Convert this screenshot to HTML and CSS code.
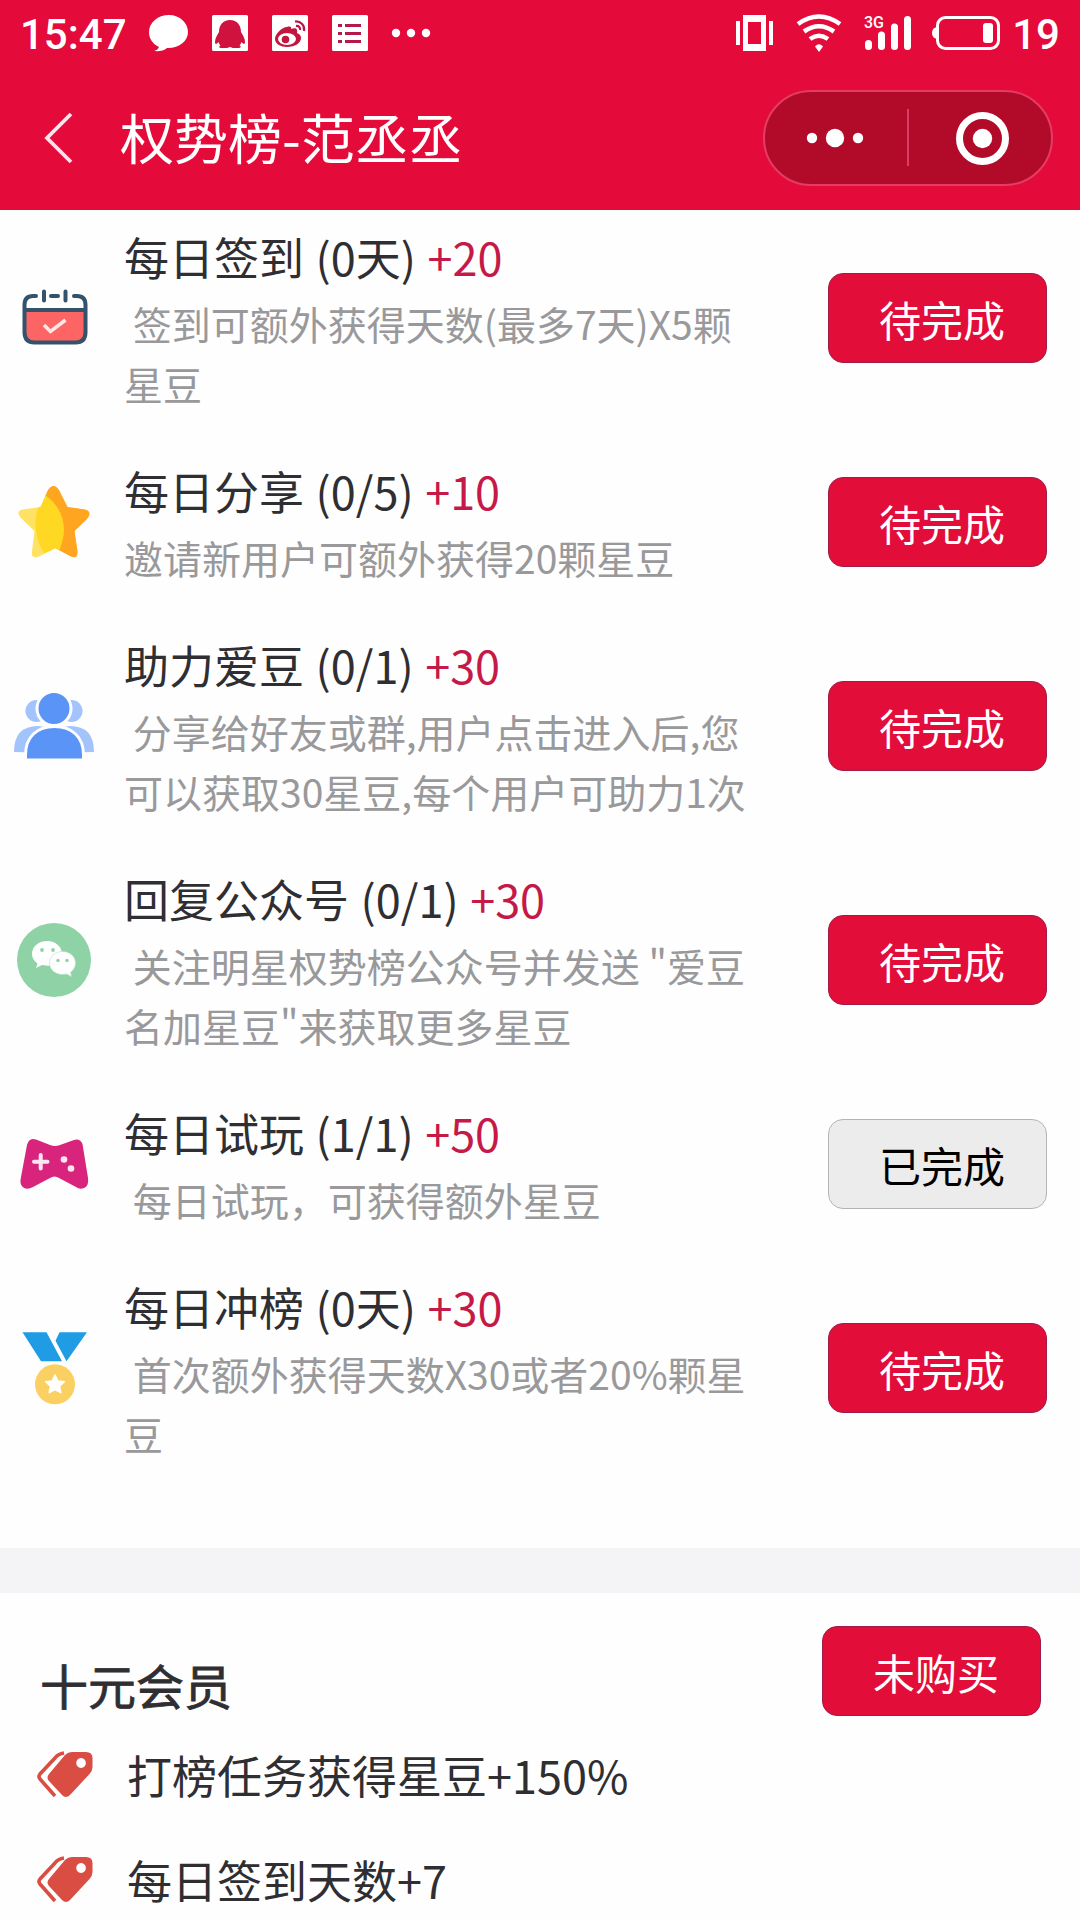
FILE: index.html
```html
<!DOCTYPE html>
<html lang="zh-CN">
<head>
  <meta charset="UTF-8" />
  <meta name="viewport" content="width=device-width, initial-scale=1.0" />
  <title>权势榜-范丞丞</title>
  <link rel="stylesheet" href="styles.css">
</head>
<body>
  <header class="header">
    <div class="status-bar">
      <span class="time">15:47</span>
      <svg class="status-left" width="290" height="40" viewBox="0 0 290 40">
        <path fill="#fff" d="M20 2C9 2 0 9.500 0 19c0 7 4 12 10 15-1 2-2 3-5 4 5 .5 10-.3 13-3 12 .5 21-7 21-16S31 2 20 2z"/>
        <rect x="63" y="2" width="36" height="36" rx="1.500" fill="#fff"/>
        <path fill="#d0123e" d="M81 7c-7 0-11 5-11 12-2 3-4 7-4 10 0 3 2 2 3.500 0 .5 1.500 1 2.500 2 3.300-2 1.500-1.500 2.700 1 2.700h5.500c1.500 0 1.500-1 3-1s1.500 1 3 1H89c3 0 3.500-1.200 1.500-2.700 1-.8 1.500-1.800 2-3.300 1.500 2 3.500 3 3.500 0 0-3-2-7-4-10 0-7-4-12-11-12z"/>
        <rect x="123" y="2" width="36" height="36" rx="1.500" fill="#fff"/>
        <path fill="#c2163f" d="M138 14c-5 0-12 7-12 12 0 5 6 8 12 8 8 0 14-4 14-9 0-3-2-4-4-5 1-4-1-6-6-4 1-2-1-3-4-2z"/>
        <ellipse cx="138" cy="26" rx="9" ry="6" fill="#fff"/>
        <circle cx="136.500" cy="26.500" r="3.800" fill="#c2163f"/>
        <path fill="none" stroke="#b5194a" stroke-width="2.200" d="M146 8.500c6-.5 10 4 9 9.500M147 13c3-.3 4.500 1.500 4 4"/>
        <rect x="183" y="2" width="36" height="36" rx="1.500" fill="#fff"/>
        <path stroke="#b5194a" stroke-width="3" d="M189 12.500h4M196 12.500h16M189 20.500h4M196 20.500h16M189 28.500h4M196 28.500h16"/>
        <g fill="#fff"><circle cx="247" cy="20" r="4.200"/><circle cx="262" cy="20" r="4.200"/><circle cx="277" cy="20" r="4.200"/></g>
      </svg>
      <svg class="status-right" width="270" height="40" viewBox="0 0 270 40">
        <path fill="#fff" fill-rule="evenodd" d="M7 2h23v36H7zM12 9v22h13V9z"/>
        <path stroke="#fff" stroke-width="4" d="M2 8v24M35 8v24"/>
        <g fill="none" stroke="#fff" stroke-width="4.600">
          <path d="M62 11Q83 -4 104 11M68 18.500Q83 8 98 18.500M74 26Q83 19.500 92 26"/>
        </g>
        <path fill="#fff" d="M83 39l-4-5.500q4-4.500 8 0z"/>
        <text class="network" x="128" y="15">3G</text>
        <path stroke="#fff" stroke-width="7" stroke-linecap="round" d="M132.500 30.500v3M145.500 22v11.500M158.500 14v19.500M171.500 6.500v27"/>
        <rect x="201.500" y="4.500" width="61" height="31" rx="8" fill="none" stroke="#fff" stroke-width="3"/>
        <path fill="#fff" d="M201 14q-5 1-5 6t5 6z"/>
        <rect x="247" y="10" width="10" height="20" rx="3" fill="#fff"/>
      </svg>
      <span class="battery">19</span>
    </div>
    <div class="nav">
      <svg class="back" width="30" height="54" viewBox="0 0 30 54">
        <path fill="none" stroke="#ffe3ec" stroke-width="3.800" d="M27 3L3 27l24 24"/>
      </svg>
      <h1>权势榜-范丞丞</h1>
      <div class="capsule">
        <svg width="286" height="92" viewBox="0 0 286 92">
          <g fill="#fff">
            <circle cx="47" cy="46" r="5.200"/>
            <circle cx="70" cy="46" r="9.200"/>
            <circle cx="93" cy="46" r="5.200"/>
            <circle cx="217.500" cy="46.500" r="9.700"/>
          </g>
          <path stroke="#dc3d5f" stroke-width="2" d="M143 17v57"/>
          <circle cx="217.500" cy="46.500" r="23" fill="none" stroke="#fff" stroke-width="7"/>
        </svg>
      </div>
    </div>
  </header>

  <main class="tasks">
    <section class="task">
      <svg class="icon" viewBox="0 0 80 80">
        <path fill="#fd6564" d="M11 32h60v25q0 7-7 7H18q-7 0-7-7z"/>
        <path fill="none" stroke="#34526b" stroke-width="4" stroke-linecap="round" d="M22 18h-3q-8.500 0-8.500 9v27q0 10.500 10 10.500h41q10 0 10-10.500V27q0-9-8.500-9h-3M37 18h7M11 32h60M30 13.500v9M51.500 13.500v9"/>
        <path fill="none" stroke="#ffe9e8" stroke-width="3.500" d="M30 47l6.500 6.500L51.500 42"/>
      </svg>
      <div class="info">
        <h2>每日签到 (0天) <span class="point">+20</span></h2>
        <p>&nbsp;签到可额外获得天数(最多7天)X5颗星豆</p>
      </div>
      <button class="btn">待完成</button>
    </section>

    <section class="task">
      <svg class="icon" viewBox="0 0 80 80">
        <defs>
          <clipPath id="starShape">
            <path d="M34 8Q39.500 0 45 8L53.500 25 71 27.500Q79 30 73 37L60.500 49 63.500 69Q64 78 56 74L41 66 25 74.500Q17 78 18 69L20.500 49 7 36Q1 29 9 27.500L26.500 25z"/>
          </clipPath>
        </defs>
        <g clip-path="url(#starShape)">
          <path fill="#ffe164" d="M0 0h80v80H0z"/>
          <path fill="#ffa51f" d="M30 0h50v80H36z"/>
          <path fill="#ffd823" d="M31 13C25 21 21.500 30 21.500 42q0 17 10 31l13-3C54 50 52 28 31 13z"/>
        </g>
      </svg>
      <div class="info">
        <h2>每日分享 (0/5) <span class="point">+10</span></h2>
        <p>邀请新用户可额外获得20颗星豆</p>
      </div>
      <button class="btn">待完成</button>
    </section>

    <section class="task">
      <svg class="icon" viewBox="0 0 80 80">
        <g fill="#a3c3fd">
          <circle cx="22.500" cy="25" r="11"/>
          <circle cx="57.500" cy="25" r="11"/>
          <path d="M0 66q0-26 24-26 24 1 24 27zM80 66q0-26-24-26-24 1-24 27z"/>
        </g>
        <g fill="#5a94f6" stroke="#fefefe" stroke-width="3">
          <path d="M11.500 76V69C11.500 51 23 40.500 40.500 40.500S69.500 51 69.500 69v7z"/>
          <circle cx="40" cy="22.500" r="17"/>
        </g>
        <path fill="#fefefe" d="M0 72.500h80V80H0zM0 67h12v6H0zM69 67h11v6H69z"/>
      </svg>
      <div class="info">
        <h2>助力爱豆 (0/1) <span class="point">+30</span></h2>
        <p>&nbsp;分享给好友或群,用户点击进入后,您可以获取30星豆,每个用户可助力1次</p>
      </div>
      <button class="btn">待完成</button>
    </section>

    <section class="task">
      <svg class="icon" viewBox="0 0 80 80">
        <circle cx="40" cy="40" r="37" fill="#8ed2a5"/>
        <path fill="#fff" d="M33 21c-9 0-15 6-15 13 0 4 2 7 5.500 9.500L22 48l6-3c13 3 20-3 20-11 0-7-6-13-15-13z"/>
        <path fill="#fff" stroke="#b5e2c4" stroke-width=".6" d="M48.500 31.500c-7.500 0-13 5-13 11.500 0 8 8 13 17 11l5 2.500-1-4c3-2.500 5-5.500 5-9.500 0-6.500-5.500-11.500-13-11.500z"/>
        <g fill="#8ed2a5"><circle cx="28" cy="30" r="1.900"/><circle cx="39" cy="30" r="1.900"/><circle cx="44" cy="40.500" r="1.700"/><circle cx="53" cy="40.500" r="1.700"/></g>
      </svg>
      <div class="info">
        <h2>回复公众号 (0/1) <span class="point">+30</span></h2>
        <p>&nbsp;关注明星权势榜公众号并发送 "爱豆名加星豆"来获取更多星豆</p>
      </div>
      <button class="btn">待完成</button>
    </section>

    <section class="task">
      <svg class="icon" viewBox="0 0 80 80">
        <path fill="#d8247d" d="M22 15.500L36 21q5 2 10 0l14-5q6-2 8.500 4L74 54q1 8-4 10-4 2-8-1L45 54q-4.500-3-9 0L19 63q-5 3-9 1-5-3-3-11l6-32q2-8 9-5.500z"/>
        <path stroke="#ffe5f1" stroke-width="4" stroke-linecap="round" d="M20 37.700h13.500M26.700 31v13.500"/>
        <circle cx="50" cy="35.500" r="3.300" fill="#ffe5f1"/>
        <circle cx="57" cy="44.500" r="3.300" fill="#ffe5f1"/>
      </svg>
      <div class="info">
        <h2>每日试玩 (1/1) <span class="point">+50</span></h2>
        <p>&nbsp;每日试玩，可获得额外星豆</p>
      </div>
      <button class="btn done">已完成</button>
    </section>

    <section class="task">
      <svg class="icon" viewBox="0 0 80 80">
        <path fill="#1f9ce4" d="M8.500 4.300h24l15.500 29H27zM45.500 4.300H73l-20.500 29-11-20.500z"/>
        <circle cx="41" cy="56.300" r="20" fill="#fbd062"/>
        <path fill="#fff" stroke="#fff" stroke-width="1.500" stroke-linejoin="round" d="M41 47l2.800 6 6.600.8-4.900 4.400 1.300 6.500L41 61.500l-5.800 3.200 1.300-6.500-4.900-4.400 6.600-.8z"/>
      </svg>
      <div class="info">
        <h2>每日冲榜 (0天) <span class="point">+30</span></h2>
        <p>&nbsp;首次额外获得天数X30或者20%颗星豆</p>
      </div>
      <button class="btn">待完成</button>
    </section>
  </main>

  <div class="divider"></div>

  <section class="member">
    <div class="member-head">
      <h3>十元会员</h3>
      <button class="btn">未购买</button>
    </div>
    <ul>
      <li>
        <svg class="tag" viewBox="0 0 58 48">
          <path fill="none" stroke="#d94d42" stroke-width="3.600" d="M28 3Q22 4 19 8L4 24q-2 2.500 0 5L19 46"/>
          <path fill="#d94d42" fill-rule="evenodd" d="M36 2h14q6.500 0 6.500 6v9q0 4-3 7L34 45q-4 4-8 0L13 31q-3-3.500 0-7L29 5q3-3 7-3zM45 8a4.800 5 0 1 0 .1 0z"/>
        </svg>
        <span>打榜任务获得星豆+150%</span>
      </li>
      <li>
        <svg class="tag" viewBox="0 0 58 48">
          <path fill="none" stroke="#d94d42" stroke-width="3.600" d="M28 3Q22 4 19 8L4 24q-2 2.500 0 5L19 46"/>
          <path fill="#d94d42" fill-rule="evenodd" d="M36 2h14q6.500 0 6.500 6v9q0 4-3 7L34 45q-4 4-8 0L13 31q-3-3.500 0-7L29 5q3-3 7-3zM45 8a4.800 5 0 1 0 .1 0z"/>
        </svg>
        <span>每日签到天数+7</span>
      </li>
    </ul>
  </section>
</body>
</html>
```

FILE: styles.css
```css
* {
  box-sizing: border-box;
}

body {
  margin: 0;
  width: 1080px;
  height: 1920px;
  overflow: hidden;
  background-color: #fefefe;
  color: #2f2e32;
  font-family: "Noto Sans CJK SC", sans-serif;
}

h1, h2, h3, p, ul {
  margin: 0;
  padding: 0;
  font-weight: normal;
}

/* header */
.header {
  height: 210px;
  background-color: #e40b3a;
  color: #fff;
}

.status-bar {
  display: flex;
  align-items: center;
  height: 66px;
  padding: 0 20px 0 20px;
  font-family: Roboto, sans-serif;
  font-size: 42px;
  font-weight: 500;
}

.time {
  width: 129px;
  padding-top: 2px;
  white-space: nowrap;
}

.status-right {
  margin-left: auto;
}

.network {
  fill: #fff;
  font-family: Roboto, sans-serif;
  font-size: 16px;
  font-weight: 500;
}

.battery {
  width: 54px;
  padding-top: 2px;
  text-align: right;
}

.nav {
  display: flex;
  align-items: center;
  height: 144px;
  padding: 0 27px 0 44px;
}

.nav h1 {
  margin-left: 46px;
  padding-bottom: 3px;
  font-size: 54px;
  line-height: 80px;
}

.capsule {
  width: 290px;
  height: 96px;
  margin-left: auto;
  border: 2px solid #e43c62;
  border-radius: 48px;
  background-color: #b20b2a;
}

.capsule svg,
.icon,
.tag,
.back {
  display: block;
}

/* task list, first row is tucked a little under the header */
.tasks {
  padding-bottom: 63px;
  margin-top: -9px;
}

.task {
  display: flex;
  align-items: center;
  padding: 22px 33px 22px 14px;
}

.icon {
  width: 80px;
  height: 80px;
}

.info {
  width: 630px;
  margin-left: 30px;
}

.info h2 {
  margin-bottom: 2px;
  font-size: 45px;
  line-height: 68px;
  word-spacing: 1.5px;
}

.info p {
  font-size: 39px;
  line-height: 60px;
  color: #99999b;
}

.point {
  color: #c51a47;
}

.btn {
  width: 219px;
  height: 90px;
  margin-left: auto;
  padding: 0 0 0 9px;
  border: 1px solid #a01c48;
  border-radius: 15px;
  background-color: #e30d39;
  color: #fff;
  font-family: inherit;
  font-size: 42px;
}

.done {
  border: 1px solid #b4b4b6;
  background-color: #ececed;
  color: #000;
}

.divider {
  height: 45px;
  background-color: #f4f3f6;
}

/* membership */
.member {
  padding: 33px 39px 0 36px;
}

.member-head {
  display: flex;
  height: 124px;
}

.member h3 {
  margin: 23px 0 0 4px;
  font-size: 48px;
  line-height: 70px;
  -webkit-text-stroke: 0.8px #2f2e32;
}

.member ul {
  list-style: none;
}

.member li {
  display: flex;
  align-items: center;
  height: 50px;
  margin-bottom: 55px;
  font-size: 45px;
  line-height: 50px;
}

.tag {
  width: 58px;
  height: 48px;
  margin: 0 33px 3px 0;
}
```
